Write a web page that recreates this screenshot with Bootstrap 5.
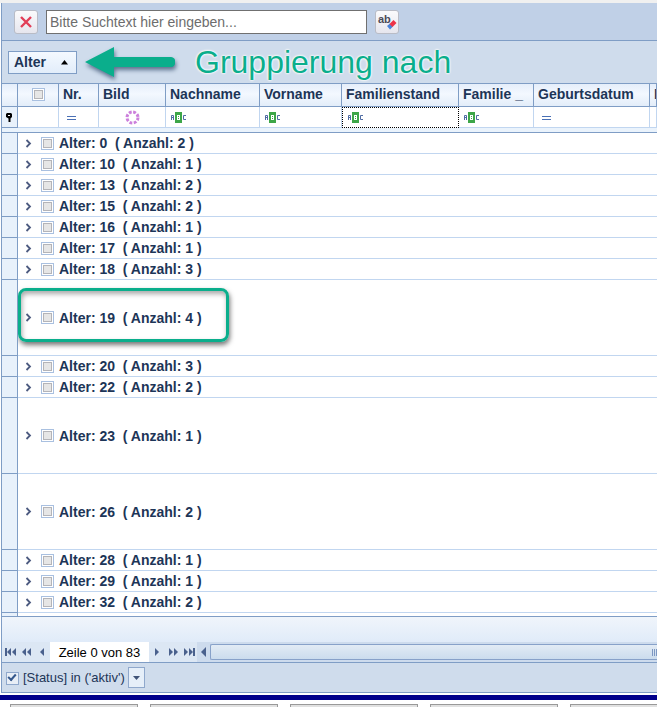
<!DOCTYPE html>
<html lang="de">
<head>
<meta charset="utf-8">
<meta name="viewport" content="width=device-width, initial-scale=1">
<title>Gruppierung nach Alter</title>
<link href="https://cdn.jsdelivr.net/npm/bootstrap@5.3.0/dist/css/bootstrap.min.css" rel="stylesheet">
<style>
:root { --line:#7f9dc5; --soft:#c1d6f0; --ink:#1d3557; --accent:#0aae8c; }
body { font-family:"Liberation Sans",Arial,sans-serif; font-size:14px; line-height:20px; color:var(--ink); background:#fff; }
button { font:inherit; color:inherit; }
svg { display:block; flex-shrink:0; }
.top-edge { height:3px; background:#f0f0f0; }
.grid-frame { border:1px solid var(--line); border-width:0 0 1px 1px; margin-left:1px; }
.search-bar { height:38px; padding-left:12px; background:#c0d0e7; border-bottom:1px solid var(--line); }
.tool-btn { width:24px; height:24px; padding:0; border:1px solid #b9bcc6; border-radius:3px; background:linear-gradient(#fafafc,#e6e6ee); }
.search-input { width:321px; height:24px; padding:0 3px; border:1px solid #707070; border-radius:0; background:#fff; }
.search-input::placeholder { color:#6d6d6d; opacity:1; }
.group-bar { height:43px; padding-left:6px; background:#cfdcec; border-bottom:1px solid var(--line); }
.group-chip { width:69px; height:23px; padding:0 7px 0 5px; border:1px solid var(--line); background:linear-gradient(#f4f9ff,#e2edfa); }
.arrow-mark { filter:drop-shadow(1px 3px 2px #5b718e); }
.callout-title { font-size:32px; line-height:40px; color:var(--accent); text-shadow:0 0 2px #fff,0 0 2px #fff,0 0 3px #fff; }
.data-grid { table-layout:fixed; border-collapse:separate; border-spacing:0; width:100%; }
.data-grid th, .data-grid td { padding:0; overflow:hidden; white-space:nowrap; }
.data-grid .heads th { height:23px; padding-left:4px; border-right:1px solid var(--line); border-bottom:1px solid var(--line); background:linear-gradient(#e5eefa,#f3f8ff 45%,#e3edf9); line-height:20px; vertical-align:top; }
.data-grid .filters td { height:21px; border-right:1px solid var(--soft); border-bottom:1px solid var(--soft); background:#fff; }
.data-grid .filters td.focus-cell { border:1px dotted #000; }
.data-grid .gap-row td { height:5px; background:#eaf3fc; border-bottom:1px solid var(--line); }
.data-grid .side, .data-grid .filters td.side { background:#e8f1fb; border-right:1px solid var(--line); border-bottom:1px solid var(--line); }
.group-cell { height:21px; border-bottom:1px solid var(--soft); position:relative; font-weight:bold; }
.tall .group-cell { height:76px; }
.partial .side, .partial .group-cell { height:3px; border-bottom:0; }
.group-line { padding-left:6px; height:20px; }
.open-btn { width:9px; height:16px; }
.group-line label { margin-left:5px; white-space:pre; }
.tick { appearance:none; width:13px; height:13px; margin:0 0 0 8px; flex-shrink:0; border:1px solid #a9c0e0; background:#fff; display:block; padding:1px; }
.tick::before { content:""; display:block; height:9px; border:1px solid #b4b4b8; background:#e6e6e6; }
.heads .tick { margin:4px 0 0 10px; }
.filter-tick { margin:2px 0 0 4px; border-color:#8fa8cc; background:#e8eef6; }
.filter-tick::before { border:0; height:5px; width:8px; border-left:2px solid #35588c; border-bottom:2px solid #35588c; background:none; transform:rotate(-48deg); }
.outline-mark { position:absolute; left:0; top:8px; bottom:13px; width:211px; border:3px solid var(--accent); border-radius:8px; box-shadow:1px 3px 5px #777,inset 1px 3px 5px #aaa; pointer-events:none; }
.grid-foot { height:26px; border-top:1px solid var(--line); background:linear-gradient(#f0f5fb,#e0ebf9); }
.nav-strip { height:21px; background:#dce7f4; border-bottom:1px solid var(--line); color:#000; font-size:13px; }
.flat, .nav-strip button { border:0; background:none; padding:0; display:flex; align-items:center; justify-content:center; }
.nav-strip button { width:16px; height:20px; color:#4a618d; }
.row-text { background:#fff; width:99px; height:20px; line-height:21px; }
.scroll-track { background:#cddbed; }
.nav-strip .scroll-btn { width:12px; }
.scroll-thumb { height:16px; margin-left:1px; border:1px solid #87a1c9; border-right:0; border-radius:2px 0 0 2px; background:linear-gradient(#e2ebf5,#cbdced); }
.filter-bar { height:29px; background:#cfdcec; font-size:13px; }
.drop-btn { width:17px; height:21px; margin-left:3px; border:1px solid #8fa8cc; background:#e6eff9; padding:0; }
.navy-line { height:5px; margin-top:2px; background:#00008b; }
.bottom-row { gap:12px; padding:4px 0 0 10px; }
.bottom-row button { width:128px; height:24px; flex-shrink:0; border:1px solid #999; background:#e1e1e1; }
</style>
</head>
<body class="vh-100 overflow-hidden">
<svg class="d-none">
  <symbol id="abc" viewBox="0 0 17 11"><path d="M5 0h7v11H5z" fill="#3da648"/><path d="M1.500 8V3.500h2V8M1.500 5.500h2M16 3.500h-2.500v4H16" fill="none" stroke="#4f6ba3"/><path d="M7.500 3v5M7 3.500h3M7 5.500h3M7 7.500h3M9.500 3v5" fill="none" stroke="#fff"/></symbol>
  <symbol id="eq" viewBox="0 0 16 11"><path d="M2 4.500h9M2 7.500h9" stroke="#4a70b5"/></symbol>
  <symbol id="chev" viewBox="0 0 9 9"><path d="M2.500 1 6 4.500 2.500 8" fill="none" stroke="#4d5b80" stroke-width="1.800"/></symbol>
</svg>
<div class="top-edge"></div>
<main class="grid-frame overflow-hidden">
  <div class="search-bar d-flex align-items-center">
    <button class="tool-btn d-flex align-items-center justify-content-center" aria-label="Suche löschen"><svg width="14" height="14"><path d="m2 2 10 10M12 2 2 12" stroke="#e23e57" stroke-width="2.400"/></svg></button>
    <input class="search-input ms-2" type="text" placeholder="Bitte Suchtext hier eingeben..." aria-label="Suchtext">
    <button class="tool-btn ms-2 d-flex align-items-center justify-content-center" aria-label="Text leeren"><svg width="22" height="22"><text x="2" y="12" font-size="11" font-weight="bold" fill="#4b4b58">ab</text><path d="m11 15 3-2.500 3 3-3 3z" fill="#4a83d8"/><path d="m13.500 13 4-4 3 3-4 4z" fill="#ed3347"/></svg></button>
  </div>
  <div class="group-bar d-flex align-items-center">
    <button class="group-chip fw-bold d-flex align-items-center justify-content-between">Alter <svg width="8" height="5"><path d="M0 4.500 3.500 0 7 4.500z" fill="#000"/></svg></button>
    <svg class="arrow-mark ms-2" width="90" height="30" aria-hidden="true"><path d="M0 15 29 0v10h57a4 4 0 0 1 4 5 4 4 0 0 1-4 5H29v10z" fill="#0aae8c"/></svg>
    <div class="callout-title ms-3 ps-1">Gruppierung nach</div>
  </div>
  <table class="data-grid">
    <colgroup><col style="width:16px"><col style="width:41px"><col style="width:40px"><col style="width:67px"><col style="width:94px"><col style="width:82px"><col style="width:117px"><col style="width:75px"><col style="width:116px"><col></colgroup>
    <thead>
      <tr class="heads"><th></th><th><input class="tick" type="checkbox" aria-label="Alle auswählen"></th><th>Nr.</th><th>Bild</th><th>Nachname</th><th>Vorname</th><th>Familienstand</th><th>Familie _</th><th>Geburtsdatum</th><th>I</th></tr>
      <tr class="filters">
        <td class="side"><svg class="mx-auto" width="7" height="9"><path d="M1 0h4l1 1v3L4.500 5.500V9h-2V5.500L0 4V1z" fill="#000"/><path d="M2 2h2v1H2z" fill="#fff"/></svg></td>
        <td></td>
        <td><button class="flat ms-2" aria-label="Gleich"><svg width="16" height="11"><use href="#eq" x="-2"/></svg></button></td>
        <td><button class="flat mx-auto" aria-label="Bildfilter"><svg width="15" height="15"><circle cx="7.500" cy="7.500" r="5.500" fill="none" stroke="#cc80dc" stroke-width="3" stroke-dasharray="2.820 1.500"/></svg></button></td>
        <td><button class="flat ms-1" aria-label="Enthält"><svg width="17" height="11"><use href="#abc"/></svg></button></td>
        <td><button class="flat ms-1" aria-label="Enthält"><svg width="17" height="11"><use href="#abc"/></svg></button></td>
        <td class="focus-cell"><button class="flat ms-1" aria-label="Enthält"><svg width="17" height="11"><use href="#abc"/></svg></button></td>
        <td><button class="flat ms-1" aria-label="Enthält"><svg width="17" height="11"><use href="#abc"/></svg></button></td>
        <td><button class="flat ms-2" aria-label="Gleich"><svg width="16" height="11"><use href="#eq" x="-2"/></svg></button></td>
        <td></td>
      </tr>
      <tr class="gap-row"><td colspan="10"></td></tr>
    </thead>
    <tbody id="groups"></tbody>
  </table>
  <div class="grid-foot"></div>
  <div class="nav-strip d-flex">
    <button aria-label="Erste Zeile"><svg width="11" height="8"><path d="M0 0h2v8H0zM6 0v8L2 4zM11 0v8L7 4z" fill="currentColor"/></svg></button>
    <button aria-label="Seite zurück"><svg width="9" height="8"><path d="M4 0v8L0 4zM9 0v8L5 4z" fill="currentColor"/></svg></button>
    <button aria-label="Zeile zurück"><svg width="4" height="8"><path d="M4 0v8L0 4z" fill="currentColor"/></svg></button>
    <span class="row-text text-center">Zeile 0 von 83</span>
    <button aria-label="Zeile vor"><svg width="4" height="8"><path d="M0 0v8l4-4z" fill="currentColor"/></svg></button>
    <button aria-label="Seite vor"><svg width="9" height="8"><path d="M0 0v8l4-4zM5 0v8l4-4z" fill="currentColor"/></svg></button>
    <button aria-label="Letzte Zeile"><svg width="11" height="8"><path d="M0 0v8l4-4zM5 0v8l4-4zM9 0h2v8H9z" fill="currentColor"/></svg></button>
    <div class="scroll-track flex-grow-1 d-flex align-items-center">
      <button class="scroll-btn" aria-label="Nach links"><svg width="5" height="10"><path d="M5 0v10L0 5z" fill="currentColor"/></svg></button>
      <div class="scroll-thumb flex-grow-1 d-flex align-items-center justify-content-end"><svg width="6" height="7"><path d="M1.500 0v7M3.500 0v7M5.500 0v7" stroke="#7c97c2"/></svg></div>
    </div>
  </div>
  <div class="filter-bar d-flex align-items-center">
    <input class="tick filter-tick" id="status" type="checkbox" checked>
    <label class="ms-1" for="status">[Status] in ('aktiv')</label>
    <button class="drop-btn d-flex align-items-center justify-content-center" aria-label="Filter wählen"><svg width="7" height="4"><path d="M0 0h7L3.500 4z" fill="#3f5378"/></svg></button>
  </div>
</main>
<div class="navy-line"></div>
<div class="bottom-row d-flex overflow-hidden"><button aria-label="Aktion 1"></button><button aria-label="Aktion 2"></button><button aria-label="Aktion 3"></button><button aria-label="Aktion 4"></button><button aria-label="Aktion 5"></button></div>
<script>
const groups = [[0,2],[10,1],[13,2],[15,2],[16,1],[17,1],[18,3],[19,4,1],[20,3],[22,2],[23,1,1],[26,2,1],[28,1],[29,1],[32,2]];
document.getElementById('groups').innerHTML = groups.map(([age, count, tall]) => `
<tr class="${tall ? 'tall' : ''}"><td class="side"></td><td class="group-cell" colspan="9">
<div class="group-line d-flex align-items-center"><button class="flat open-btn" aria-label="Gruppe öffnen"><svg width="9" height="9"><use href="#chev"/></svg></button><input class="tick" type="checkbox" id="g${age}"><label for="g${age}">Alter: ${age}  ( Anzahl: ${count} )</label></div>${age === 19 ? '<div class="outline-mark"></div>' : ''}</td></tr>`).join('') +
'<tr class="partial"><td class="side"></td><td class="group-cell" colspan="9"></td></tr>';
</script>
<script src="https://cdn.jsdelivr.net/npm/bootstrap@5.3.0/dist/js/bootstrap.bundle.min.js"></script>
</body>
</html>
